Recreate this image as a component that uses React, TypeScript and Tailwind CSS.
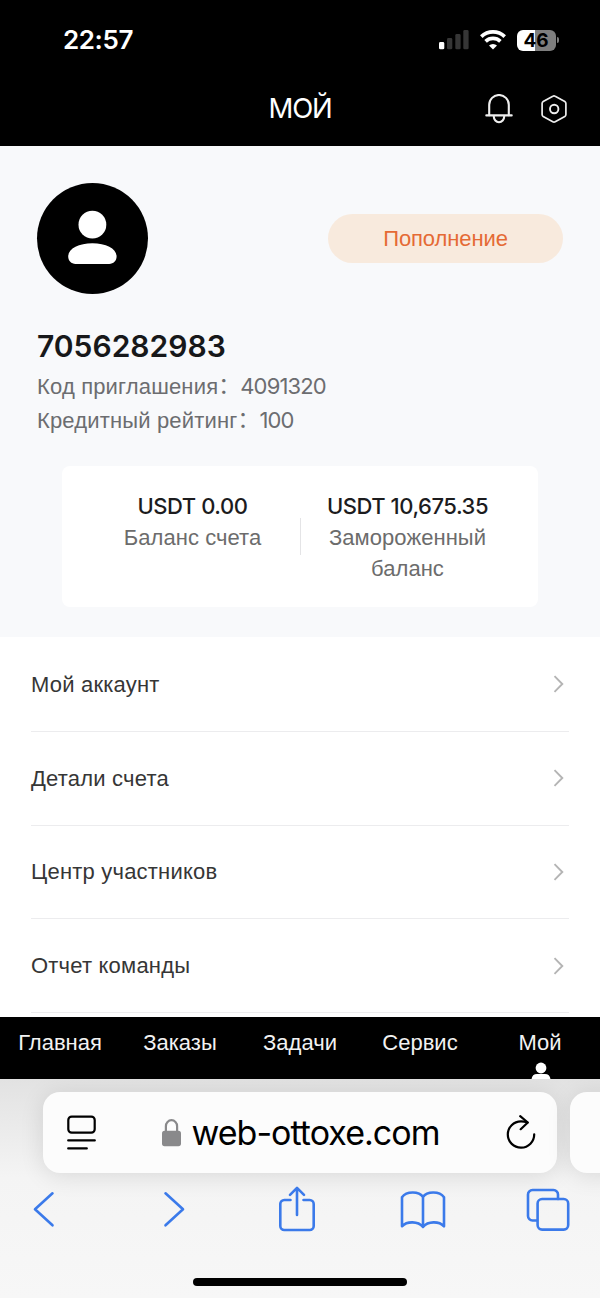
import type { ReactNode } from 'react';

const menuItems = [
    { id: 1, label: 'Мой аккаунт' },
    { id: 2, label: 'Детали счета' },
    { id: 3, label: 'Центр участников' },
    { id: 4, label: 'Отчет команды' },
];

const tabs = [
    { id: 'home', label: 'Главная' },
    { id: 'orders', label: 'Заказы' },
    { id: 'tasks', label: 'Задачи' },
    { id: 'service', label: 'Сервис' },
    { id: 'mine', label: 'Мой' },
];

function StatusBar() {
    return (
        <div className="flex h-20 items-center justify-between pl-[63px] pr-[41px] font-['Inter',sans-serif]">
            <span className="text-[26px] font-semibold leading-none tracking-[-0.4px]">22:57</span>
            <div className="flex items-center">
                <svg className="mr-[11px] h-5 w-[30px]" viewBox="0 0 30 20">
                    <rect x="0" y="12" width="5.3" height="7.3" rx="1.4" fill="#fff" />
                    <rect x="8" y="8" width="5.3" height="11.3" rx="1.4" fill="#363636" />
                    <rect x="16.3" y="4" width="5.3" height="15.3" rx="1.4" fill="#363636" />
                    <rect x="24.3" y="0" width="5.3" height="19.3" rx="1.4" fill="#363636" />
                </svg>
                <svg className="mr-[11px] h-5 w-[26px]" viewBox="0 0 26 20" fill="none" stroke="#fff" strokeWidth="3.7">
                    <path d="M1.3 6.6a17 17 0 0 1 23.4 0" />
                    <path d="M5.6 11.4a10.8 10.8 0 0 1 14.8 0" />
                    <path d="M13 19.5l-4-4a5.8 5.8 0 0 1 8 0z" fill="#fff" stroke="none" />
                </svg>
                <div className="flex items-center gap-[1.5px]">
                    <div className="flex h-[21px] w-[39px] items-center justify-center rounded-[6px] bg-linear-to-r from-white from-[47%] to-[#7e7e7e] to-[47%] text-[19px] font-bold leading-none text-black">
                        46
                    </div>
                    <div className="h-[6px] w-[2px] rounded-r-full bg-[#7e7e7e]" />
                </div>
            </div>
        </div>
    );
}

function TitleBar() {
    return (
        <div className="grid h-[66px] grid-cols-[1fr_auto_1fr] pt-[10px]">
            <h1 className="col-start-2 font-['Inter',sans-serif] text-[27.5px] leading-[37px] tracking-[-1.2px]">МОЙ</h1>
            <div className="flex items-start justify-end gap-[28px] pr-[33.5px] pt-1">
                <svg className="h-[30px] w-[28px]" viewBox="0 0 28 30" fill="none" stroke="#eee" strokeWidth="2.1" strokeLinecap="round">
                    <path d="M4.2 21.3V10.8a9.8 9.8 0 0 1 19.6 0v10.5" />
                    <path d="M1.3 21.4h25.4" />
                    <path d="M8.8 22.4a5.2 5.8 0 0 0 10.4 0" />
                </svg>
                <svg className="mt-px h-[28px] w-[26px]" viewBox="0 0 26 28" fill="none" stroke="#eee" strokeWidth="1.7" strokeLinejoin="round">
                    <path d="M11.8 1.3a2.4 2.4 0 0 1 2.4 0l9.6 5.2a2.3 2.3 0 0 1 1.1 2v11a2.3 2.3 0 0 1-1.1 2l-9.6 5.2a2.4 2.4 0 0 1-2.4 0l-9.6-5.2a2.3 2.3 0 0 1-1.1-2v-11a2.3 2.3 0 0 1 1.1-2z" />
                    <circle cx="13.2" cy="14" r="4.2" strokeWidth="1.9" />
                </svg>
            </div>
        </div>
    );
}

function InfoLine({ label, value }: { label: string; value: string }) {
    return (
        <p className="flex h-[34px] items-center text-[22px] text-[#6c6d70]">
            <span className="tracking-[0.16px]">{label}</span>
            <span className="-translate-y-[3px] font-['Noto_Sans_CJK_SC',sans-serif]">：</span>
            <span className="font-['Inter',sans-serif] tracking-[-0.85px]">{value}</span>
        </p>
    );
}

function Balance({ amount, label }: { amount: string; label: string }) {
    return (
        <div className="flex w-[170px] flex-col text-center leading-[31px]">
            <span className="whitespace-nowrap font-['Inter',sans-serif] text-[22px] font-medium tracking-[-0.45px] text-[#1c1c1e]">
                {amount}
            </span>
            <span className="text-[22px] tracking-[0.05px] text-[#6c6c6c]">{label}</span>
        </div>
    );
}

function Profile() {
    return (
        <section className="h-[491px] bg-[#f8f9fb] px-[37px] pt-[37px]">
            <div className="flex items-center justify-between">
                <div className="h-[111px] w-[111px] rounded-full bg-black">
                    <svg viewBox="0 0 111 111" fill="#fff">
                        <circle cx="55.4" cy="41.7" r="13.9" />
                        <path d="M31.2 73.5c0-8 10.7-13.3 24.2-13.3s24.2 5.3 24.2 13.3c0 4.2-3.1 7.4-7.4 7.4H38.6c-4.3 0-7.4-3.2-7.4-7.4z" />
                    </svg>
                </div>
                <button className="h-[49px] w-[235px] rounded-full bg-[#f8eadd] text-[22px] tracking-[-0.1px] text-[#e56a35]">
                    Пополнение
                </button>
            </div>
            <h2 className="mt-[34px] font-['Inter',sans-serif] text-[30px] font-semibold leading-[36px] text-[#17181a]">
                7056282983
            </h2>
            <div className="mt-[5px]">
                <InfoLine label="Код приглашения" value="4091320" />
                <InfoLine label="Кредитный рейтинг" value="100" />
            </div>
            <div className="mx-[25px] mt-[29px] flex h-[141px] items-start justify-center rounded-lg bg-white pt-[25px]">
                <Balance amount="USDT 0.00" label="Баланс счета" />
                <div className="mx-[22px] mt-[27px] h-[37px] w-px bg-[#e4e4e6]" />
                <Balance amount="USDT 10,675.35" label="Замороженный баланс" />
            </div>
        </section>
    );
}

function Menu() {
    return (
        <ul className="h-[380px] overflow-hidden bg-white px-[31px] pt-px">
            {menuItems.map((item) => (
                <li
                    key={item.id}
                    className="flex h-[93.8px] items-center justify-between border-b-[1.5px] border-[#ececee] pr-[5px] text-[22px] tracking-[0.2px] text-[#363636]"
                >
                    <span>{item.label}</span>
                    <svg className="h-[18px] w-[11px]" viewBox="0 0 11 18" fill="none" stroke="#b4b4b4" strokeWidth="1.9">
                        <path d="M1.5 1.2L9.3 9l-7.8 7.8" />
                    </svg>
                </li>
            ))}
        </ul>
    );
}

function TabBar() {
    return (
        <nav className="grid h-[62px] grid-cols-5 overflow-hidden bg-black text-[22px] text-[#f2f2f2]">
            {tabs.map((tab) => (
                <div key={tab.id} className="flex flex-col items-center pt-[10px]">
                    <span className="leading-[32px]">{tab.label}</span>
                    {tab.id === 'mine' && (
                        <svg className="ml-px mt-[3px] h-[20px] w-[20px] shrink-0" viewBox="0 0 20 20" fill="#fff">
                            <circle cx="10" cy="6" r="5.4" />
                            <path d="M0.5 18c0-3.600 2-6 5.500-6h8c3.500 0 5.500 2.400 5.500 6z" />
                        </svg>
                    )}
                </div>
            ))}
        </nav>
    );
}

function ToolIcon({ width, children }: { width: number; children: ReactNode }) {
    return (
        <svg
            className="shrink-0"
            width={width}
            height="48"
            viewBox={`0 0 ${width} 48`}
            fill="none"
            stroke="#3b7aea"
            strokeWidth="2.6"
            strokeLinecap="round"
            strokeLinejoin="round"
        >
            {children}
        </svg>
    );
}

function BrowserBar() {
    return (
        <footer className="h-[219px] overflow-hidden bg-linear-to-b from-[#e2e2e2] via-[#f4f4f4] via-45% to-[#f7f7f7]">
            <div className="flex gap-[13px] pl-[43px] pt-[13px]">
                <div className="flex h-[81px] w-[514px] shrink-0 items-center justify-between rounded-[17px] bg-[#fcfcfc] pl-[24px] pr-[21px] shadow-[0_3px_24px_rgba(0,0,0,0.11)]">
                    <svg className="h-[36px] w-[29px]" viewBox="0 0 29 36" fill="none" stroke="#000" strokeWidth="2.2" strokeLinecap="round">
                        <rect x="1.3" y="1.6" width="26.4" height="16" rx="3.4" />
                        <path d="M1.2 25.4h26.6M1.2 33.4h18.6" />
                    </svg>
                    <div className="flex items-center gap-[10px]">
                        <svg className="h-[28px] w-[19px]" viewBox="0 0 19 28" fill="#89898b">
                            <rect x="0" y="11.8" width="19" height="15.4" rx="2.6" />
                            <path d="M3.9 13V7.2a5.6 6 0 0 1 11.2 0V13" fill="none" stroke="#89898b" strokeWidth="2.2" />
                        </svg>
                        <span className="font-['Inter',sans-serif] text-[34px] leading-none tracking-[-0.97px] text-black">
                            web-ottoxe.com
                        </span>
                    </div>
                    <svg className="h-[36px] w-[30px]" viewBox="0 0 30 36" fill="none" stroke="#000" strokeWidth="2.2" strokeLinecap="round" strokeLinejoin="round">
                        <path d="M28.200 19.300A13.200 13.200 0 1 1 15 6.300c2.200 0 4.300.4 6.400 1.200" />
                        <path d="M14.200 1.200l7.600 6.300-7.100 6.700" />
                    </svg>
                </div>
                <div className="h-[81px] w-[60px] shrink-0 rounded-[17px] bg-[#fcfcfc] shadow-[0_3px_24px_rgba(0,0,0,0.11)]" />
            </div>
            <div className="flex items-center pl-[32px] pt-[11px]">
                <ToolIcon width={24}>
                    <path d="M20.5 9.3L3 25.3l17.5 16" />
                </ToolIcon>
                <div className="ml-[106px]">
                    <ToolIcon width={24}>
                        <path d="M3.5 9.3L21 25.3l-17.5 16" />
                    </ToolIcon>
                </div>
                <div className="ml-[92px]">
                    <ToolIcon width={38}>
                        <path d="M12.5 16H6.3a4 4 0 0 0-4 4v22a4 4 0 0 0 4 4h25.4a4 4 0 0 0 4-4V20a4 4 0 0 0-4-4h-6.2" />
                        <path d="M19 31V4M12 10.800l7-7 7 7" />
                    </ToolIcon>
                </div>
                <div className="ml-[84px]">
                    <ToolIcon width={46}>
                        <path d="M23 13C19 7 6.500 7 2 13.200V42.300C7 37 18 37 23 43c5-6 16-6 21-.7V13.200C39.500 7 27 7 23 13zV43" />
                    </ToolIcon>
                </div>
                <div className="ml-[80px]">
                    <ToolIcon width={44}>
                        <path d="M11 36.500H6.500A4.500 4.500 0 0 1 2 32V10.500A4.500 4.500 0 0 1 6.500 6h21A4.500 4.500 0 0 1 32 10.500V15" />
                        <rect x="11.600" y="15" width="30.600" height="30.600" rx="4.500" />
                    </ToolIcon>
                </div>
            </div>
            <div className="mx-auto mt-[46px] h-2 w-[214px] rounded-full bg-black" />
        </footer>
    );
}

export default function App() {
    return (
        <div className="h-[1298px] w-[600px] overflow-hidden bg-white font-['Liberation_Sans',Arial,sans-serif]">
            <header className="h-[146px] bg-black text-white">
                <StatusBar />
                <TitleBar />
            </header>
            <Profile />
            <Menu />
            <TabBar />
            <BrowserBar />
        </div>
    );
}
